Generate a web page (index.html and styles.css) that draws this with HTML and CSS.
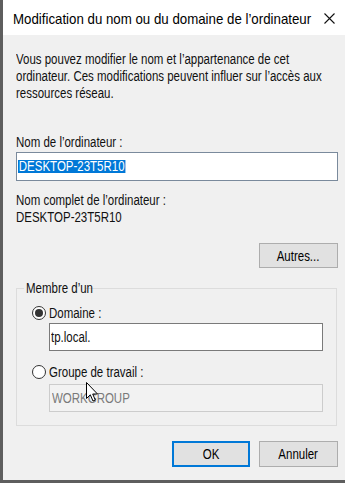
FILE: index.html
```html
<!DOCTYPE html>
<html lang="fr">
<head>
<meta charset="utf-8">
<title>Modification du nom ou du domaine de l'ordinateur</title>
<link rel="stylesheet" href="styles.css">
</head>
<body>
<div class="window">
  <div class="titlebar">
    <div class="title"><span class="t">Modification du nom ou du domaine de l’ordinateur</span></div>
    <svg class="close" width="11" height="11" viewBox="0 0 11 11"><path d="M0.5 0.5 L10.5 10.5 M10.5 0.5 L0.5 10.5" stroke="#111" stroke-width="1.1" fill="none"/></svg>
  </div>
  <div class="content">
    <p class="intro">
      <span class="t line">Vous pouvez modifier le nom et l’appartenance de cet</span>
      <span class="t line">ordinateur. Ces modifications peuvent influer sur l’accès aux</span>
      <span class="t line">ressources réseau.</span>
    </p>
    <div class="label first"><span class="t">Nom de l’ordinateur :</span></div>
    <div class="textbox focused"><span class="t selected">DESKTOP-23T5R10</span></div>
    <div class="label second"><span class="t">Nom complet de l’ordinateur :</span></div>
    <div class="label"><span class="t">DESKTOP-23T5R10</span></div>
    <div class="btn autres"><span class="t">Autres...</span></div>
    <fieldset class="group">
      <legend><span class="t">Membre d’un</span></legend>
      <div class="radio-row first-radio"><span class="radio checked"></span><span class="t">Domaine :</span></div>
      <div class="textbox sub"><span class="t">tp.local.</span></div>
      <div class="radio-row second-radio"><span class="radio"></span><span class="t">Groupe de travail :</span></div>
      <div class="textbox sub disabled"><span class="t">WORKGROUP</span></div>
    </fieldset>
    <div class="actions">
      <div class="btn default"><span class="t">OK</span></div>
      <div class="btn"><span class="t">Annuler</span></div>
    </div>
  </div>
  <svg class="cursor" width="13" height="21" viewBox="0 0 13 21"><path d="M0.5 0.5 L0.5 16.5 L4.3 12.8 L7 19 L9.3 18 L6.7 12 L11.5 12 Z" fill="#fff" stroke="#000" stroke-width="1" stroke-linejoin="round"/></svg>
</div>
</body>
</html>
```
FILE: styles.css
```css
html, body {
  margin: 0;
  padding: 0;
}
body {
  width: 345px;
  height: 483px;
  overflow: hidden;
  background: #f0f0f0;
  font-family: "Liberation Sans", Arial, sans-serif;
  font-size: 14px;
  color: #111;
}
.t {
  display: inline-block;
  white-space: nowrap;
  transform: scaleX(0.82);
  transform-origin: 0 50%;
}
.window {
  position: relative;
  box-sizing: border-box;
  height: 483px;
  border-left: 3px solid #5e5e5e;
  border-bottom: 3px solid #5e5e5e;
  display: flex;
  flex-direction: column;
}
.titlebar {
  height: 35px;
  background: #fff;
  display: flex;
  align-items: center;
  padding-left: 10px;
  padding-right: 10px;
}
.title {
  flex: 1;
  min-width: 0;
  font-size: 15px;
  color: #000;
  white-space: nowrap;
  padding-top: 1px;
}
.title .t {
  transform: scaleX(0.885);
}
.close {
  flex: none;
  margin-top: 1px;
}
.content {
  display: flex;
  flex-direction: column;
  padding-left: 13px;
  padding-right: 7px;
}
.intro {
  margin: 16px 0 0;
  line-height: 17px;
}
.intro .line {
  display: block;
}
.label {
  line-height: 17px;
  white-space: nowrap;
}
.label.first {
  margin-top: 32px;
}
.label.second {
  margin-top: 11px;
}
.textbox {
  box-sizing: border-box;
  height: 29px;
  margin-top: 1px;
  background: #fff;
  border: 1px solid #7a8a9c;
  display: flex;
  align-items: center;
  padding-left: 1px;
  white-space: nowrap;
}
.selected {
  background: #0078d7;
  color: #fff;
  line-height: 13px;
  padding: 0 1px;
}
.btn {
  box-sizing: border-box;
  width: 79px;
  height: 25px;
  background: #e1e1e1;
  border: 1px solid #adadad;
  display: flex;
  align-items: center;
  justify-content: center;
  color: #000;
}
.btn .t {
  transform-origin: 50% 50%;
}
.autres {
  align-self: flex-end;
  margin-top: 17px;
}
.group {
  box-sizing: border-box;
  width: 321px;
  margin: 12px 0 0;
  padding: 0 13px 13px 15px;
  border: 1px solid #dcdcdc;
  min-width: 0;
}
.group legend {
  margin-left: -8px;
  padding: 0 2px;
  line-height: 17px;
  width: 58px;
  white-space: nowrap;
}
.radio-row {
  display: flex;
  align-items: center;
  height: 17px;
  gap: 3px;
  white-space: nowrap;
}
.first-radio {
  margin-top: 7px;
}
.second-radio {
  margin-top: 12px;
}
.radio {
  flex: none;
  box-sizing: border-box;
  width: 14px;
  height: 14px;
  border: 1px solid #333;
  border-radius: 50%;
  background: #fff;
  display: flex;
  align-items: center;
  justify-content: center;
}
.radio.checked::after {
  content: "";
  width: 8px;
  height: 8px;
  border-radius: 50%;
  background: #333;
}
.textbox.sub {
  width: 274px;
  height: 28px;
  margin-left: 17px;
  border-color: #7a7a7a;
}
.first-radio + .textbox.sub {
  margin-top: 2px;
}
.second-radio + .textbox.sub {
  margin-top: 4px;
}
.textbox.disabled {
  background: #f2f2f2;
  border-color: #cccccc;
  color: #7a7a7a;
  padding-left: 2px;
}
.actions {
  display: flex;
  justify-content: flex-end;
  gap: 9px;
  margin-top: 15px;
}
.actions .btn {
  height: 26px;
}
.btn.default {
  width: 78px;
  border: 2px solid #0078d7;
}
.cursor {
  position: absolute;
  left: 83px;
  top: 382px;
}
```
